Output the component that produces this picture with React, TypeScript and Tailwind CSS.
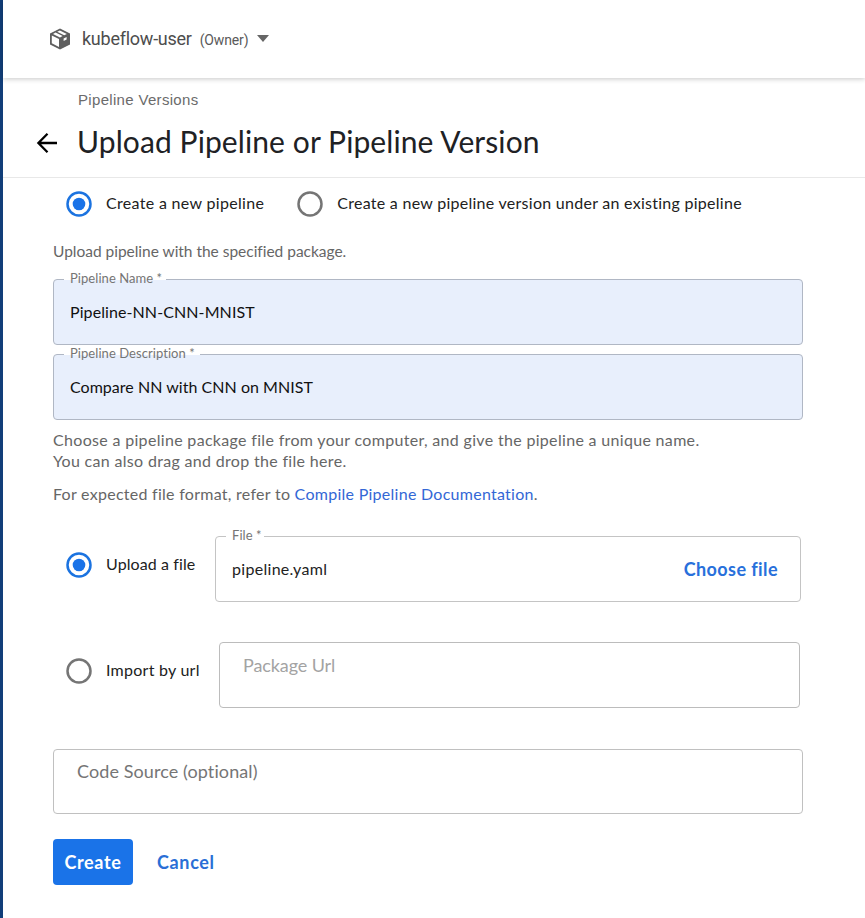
import type { ReactNode } from 'react';

function Radio({ checked = false }: { checked?: boolean }) {
  return (
    <svg className="h-[26px] w-[26px] shrink-0" viewBox="0 0 26 26" fill="none">
      <circle cx="13" cy="13" r="11.5" stroke={checked ? '#1b73e0' : '#757575'} strokeWidth="2.5" />
      {checked && <circle cx="13" cy="13" r="6.3" fill="#1a73e8" />}
    </svg>
  );
}

function Option({ checked, className, children }: { checked?: boolean; className: string; children: ReactNode }) {
  return (
    <label className="flex items-center gap-[14px] whitespace-nowrap text-base leading-6 text-[#212121]">
      <Radio checked={checked} />
      <span className={`pb-[2px] ${className}`}>{children}</span>
    </label>
  );
}

function Field({ label, className, legend, children }: { label: string; className: string; legend: string; children: ReactNode }) {
  return (
    <div className={`relative flex h-[66px] items-center rounded border px-[17px] ${className}`}>
      <div className={`absolute -top-px left-[10px] h-px bg-white ${legend}`} />
      <span className="absolute -top-[11px] left-4 whitespace-nowrap text-[13px] leading-[18px] tracking-[0.06px] text-[#757575]">{label}</span>
      {children}
    </div>
  );
}

export default function App() {
  return (
    <div className="flex h-[918px] w-[865px] overflow-hidden bg-white font-['Lato',sans-serif]">
      <div className="w-[3px] shrink-0 bg-[#113e79]" />
      <main className="flex min-w-0 flex-1 flex-col">
        <header className="flex h-[78px] shrink-0 items-center pl-[46px] font-['Roboto',sans-serif] text-[#5a5a5a] shadow-[0_1px_5px_rgba(0,0,0,0.22)]">
          <svg className="mb-px h-[22px] w-[22px]" viewBox="0 0 22 22">
            <path d="M11 .6 21 5.4V16.4L11 21.4 1 16.4V5.4Z" fill="#5f5f5f" />
            <path d="M8.2 3.8 10.9 2.5 17.9 6 15.2 7.3ZM6.6 4.6 13.6 8.1 11 9.4 4 5.9Z" fill="#fff" />
            <path d="M2.8 7.5 10 11.1V19L2.8 15.3Z" fill="#fff" />
            <path d="M14.6 10.6 17.6 9.1V11.6L14.6 13.1Z" fill="#fff" />
          </svg>
          <span className="ml-[11px] text-lg tracking-[-0.25px] text-[#4d4d4d]">kubeflow-user</span>
          <span className="mt-[2px] ml-[8px] text-sm tracking-[-0.15px]">(Owner)</span>
          <span className="ml-[9px] mb-px h-0 w-0 border-x-[6.5px] border-t-[7px] border-x-transparent border-t-[#666]" />
        </header>
        <div className="flex h-[100px] shrink-0 flex-col border-b border-[#e8e8e8] pt-3">
          <div className="pl-[75px] font-['Liberation_Sans',sans-serif] text-[15px] leading-5 tracking-[0.32px] text-[#6b6b6b]">Pipeline Versions</div>
          <div className="mt-[14px] flex h-9 items-center">
            <svg className="mt-px ml-[33px] h-[22px] w-[22px]" viewBox="0 0 22 22" fill="none" stroke="#000" strokeWidth="2.3">
              <path d="M21 11H3M11.5 1.8 2.4 11l9.1 9.2" />
            </svg>
            <h1 className="mb-[2px] ml-[19px] whitespace-nowrap text-[30px] leading-9 tracking-[0.1px] text-[#202124]">Upload Pipeline or Pipeline Version</h1>
          </div>
        </div>
        <form className="flex flex-col items-start pl-[50px]">
          <div className="mt-[13px] flex gap-[33px] pl-[13px]">
            <Option checked className="tracking-[0.32px]">Create a new pipeline</Option>
            <Option className="tracking-[0.27px]">Create a new pipeline version under an existing pipeline</Option>
          </div>
          <p className="mt-6 text-[15.5px] leading-[21px] tracking-[-0.02px] text-[#666]">Upload pipeline with the specified package.</p>
          <Field label="Pipeline Name *" legend="w-[102px]" className="mt-[17px] w-[750px] border-[#b0b7c4] bg-[#e8effc]">
            <span className="-ml-px text-base tracking-[0.09px] text-[#111]">Pipeline-NN-CNN-MNIST</span>
          </Field>
          <Field label="Pipeline Description *" legend="w-[136px]" className="mt-[9px] w-[750px] border-[#b0b7c4] bg-[#e8effc]">
            <span className="-ml-px text-base tracking-[0.03px] text-[#111]">Compare NN with CNN on MNIST</span>
          </Field>
          <p className="mt-[9px] whitespace-nowrap text-base leading-[21px] tracking-[0.32px] text-[#666]">
            Choose a pipeline package file from your computer, and give the pipeline a unique name.
            <br />
            You can also drag and drop the file here.
          </p>
          <p className="mt-3 whitespace-nowrap text-base leading-[21px] tracking-[0.27px] text-[#666]">
            For expected file format, refer to <a className="text-[#3367d6]">Compile Pipeline Documentation</a>.
          </p>
          <div className="mt-8 flex items-start pl-[13px]">
            <div className="mt-4 w-[149px]">
              <Option checked className="tracking-[0.1px]">Upload a file</Option>
            </div>
            <Field label="File *" legend="w-[38px]" className="w-[586px] justify-between border-[#c4c4c4]">
              <span className="-ml-px text-base tracking-[0.3px] text-[#222]">pipeline.yaml</span>
              <span className="mr-[5px] mb-px text-lg font-bold tracking-[0.42px] text-[#2870db]">Choose file</span>
            </Field>
          </div>
          <div className="mt-10 flex items-start pl-[13px]">
            <div className="mt-4 w-[153px]">
              <Option className="tracking-[0.25px]">Import by url</Option>
            </div>
            <div className="h-[66px] w-[581px] rounded border border-[#bcbcbc] pt-[10px] pl-[23px] text-lg leading-6 tracking-[-0.1px] text-[#a3a3a3]">Package Url</div>
          </div>
          <div className="mt-[41px] h-[65px] w-[750px] rounded border border-[#c0c0c0] pt-[9px] pl-[23px] text-lg leading-6 tracking-[0.1px] text-[#757575]">Code Source (optional)</div>
          <div className="mt-[25px] flex items-center">
            <button type="button" className="h-[46px] w-20 rounded bg-[#1a73e8] pb-px text-lg font-bold tracking-[0.65px] text-white">Create</button>
            <button type="button" className="ml-6 text-lg font-bold tracking-[0.65px] text-[#2a6fd6]">Cancel</button>
          </div>
        </form>
      </main>
    </div>
  );
}
